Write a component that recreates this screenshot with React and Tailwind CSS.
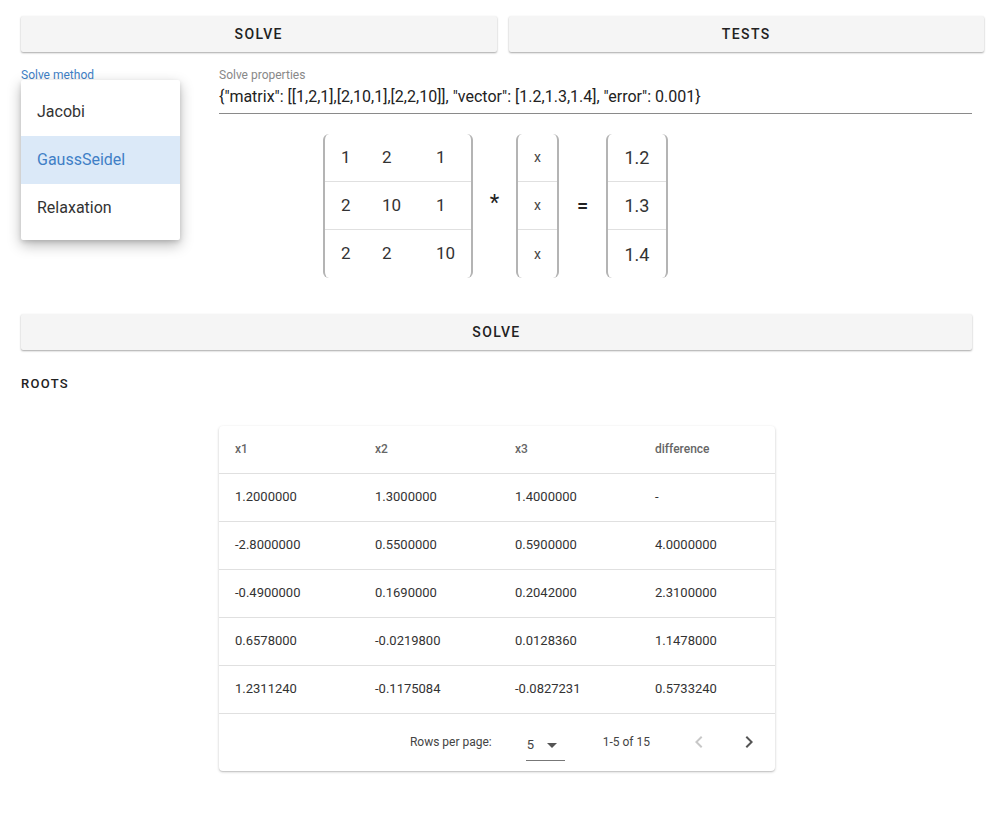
import React from 'react';

const matrix = [
    ['1', '2', '1'],
    ['2', '10', '1'],
    ['2', '2', '10'],
];
const vector = ['1.2', '1.3', '1.4'];

const roots = [
    ['1.2000000', '1.3000000', '1.4000000', '-'],
    ['-2.8000000', '0.5500000', '0.5900000', '4.0000000'],
    ['-0.4900000', '0.1690000', '0.2042000', '2.3100000'],
    ['0.6578000', '-0.0219800', '0.0128360', '1.1478000'],
    ['1.2311240', '-0.1175084', '-0.0827231', '0.5733240'],
];

const methods = ['Jacobi', 'GaussSeidel', 'Relaxation'];

const Button = ({ children, className = '' }) => (
    <button className={`h-9 bg-[#f5f5f5] rounded-[2px] shadow-[0_1px_2px_rgba(0,0,0,0.35)] text-[14px] font-medium tracking-[0.1em] text-[#222] ${className}`}>
        {children}
    </button>
);

const Bracket = ({ children, className = '' }) => (
    <div className={`border-x-2 border-[#b4b4b4] rounded-[6px] ${className}`}>{children}</div>
);

export default function App() {
    return (
        <div className="w-[1005px] min-h-[819px] bg-white px-[21px] pt-4 text-[#222]" style={{ fontFamily: 'Roboto, "Liberation Sans", sans-serif' }}>
            {/* top actions */}
            <div className="flex gap-3">
                <Button className="flex-1">SOLVE</Button>
                <Button className="flex-1">TESTS</Button>
            </div>

            <div className="flex pr-3 mt-[16px]">
                {/* method select with open menu */}
                <div className="w-[198px] relative">
                    <div className="text-[12px] text-[#3f7fc6] leading-[14px]">Solve method</div>
                    <div className="absolute left-0 top-[12px] w-[159px] bg-white rounded-[2px] py-2 shadow-[0_5px_14px_rgba(0,0,0,0.28),0_2px_4px_rgba(0,0,0,0.12)] z-10">
                        {methods.map((m) => (
                            <div key={m} className={`h-12 flex items-center px-4 text-[16px] ${m === 'GaussSeidel' ? 'bg-[#dbe9f8] text-[#3f7fc6]' : 'text-[#333]'}`}>
                                {m}
                            </div>
                        ))}
                    </div>
                </div>

                {/* properties input */}
                <div className="flex-1">
                    <div className="text-[12px] text-[#888] leading-[14px]">Solve properties</div>
                    <div className="text-[16px] leading-[19px] mt-[5px] pb-[7px] border-b border-[#8a8a8a]">
                        {'{"matrix": [[1,2,1],[2,10,1],[2,2,10]], "vector": [1.2,1.3,1.4], "error": 0.001}'}
                    </div>
                </div>
            </div>

            {/* equation */}
            <div className="flex items-center mt-[20px] ml-[302px]">
                <Bracket className="w-[150px]">
                    {matrix.map((row, i) => (
                        <div key={i} className={`flex h-12 items-center text-[17px] text-[#333] ${i < 2 ? 'border-b border-[#e0e0e0]' : ''}`}>
                            <span className="w-[57px] pl-4">{row[0]}</span>
                            <span className="w-[54px]">{row[1]}</span>
                            <span>{row[2]}</span>
                        </div>
                    ))}
                </Bracket>
                <div className="w-[43px] text-center text-[22px] text-[#222] -mt-[8px]">*</div>
                <Bracket className="w-[43px]">
                    {vector.map((_, i) => (
                        <div key={i} className={`h-12 flex items-center justify-center text-[14px] text-[#444] ${i < 2 ? 'border-b border-[#e0e0e0]' : ''}`}>x</div>
                    ))}
                </Bracket>
                <div className="w-[47px] text-center text-[20px] font-medium">=</div>
                <Bracket className="w-[62px]">
                    {vector.map((v, i) => (
                        <div key={v} className={`h-12 flex items-center justify-center text-[18px] text-[#333] ${i < 2 ? 'border-b border-[#e0e0e0]' : ''}`}>{v}</div>
                    ))}
                </Bracket>
            </div>

            <div className="pr-3 mt-[36px]">
                <Button className="w-full">SOLVE</Button>
            </div>

            <div className="mt-[24px] text-[13px] font-medium tracking-[0.1em] text-[#222]">ROOTS</div>

            {/* results table */}
            <div className="ml-[198px] mt-[32px] w-[556px] bg-white rounded-[4px] shadow-[0_1px_3px_rgba(0,0,0,0.2),0_1px_1px_rgba(0,0,0,0.1)]">
                <div className="grid grid-cols-[140px_140px_140px_1fr] h-12 items-center px-4 text-[12px] font-medium text-[#666] border-b border-[#e0e0e0]">
                    <span>x1</span><span>x2</span><span>x3</span><span>difference</span>
                </div>
                {roots.map((r, i) => (
                    <div key={i} className="grid grid-cols-[140px_140px_140px_1fr] h-12 items-center px-4 text-[13px] text-[#333] border-b border-[#e0e0e0]">
                        {r.map((c, j) => <span key={j}>{c}</span>)}
                    </div>
                ))}
                <div className="h-[57px] flex items-center justify-end pr-[14px] text-[12px] text-[#444]">
                    <span>Rows per page:</span>
                    <div className="ml-[34px] w-[39px] h-[32px] flex items-center border-b border-[#777] mt-[6px]">
                        <span className="ml-[1px] text-[13px]">5</span>
                        <svg viewBox="0 0 24 24" className="w-6 h-6 ml-[6px] fill-[#555]"><path d="M7 10l5 5 5-5z" /></svg>
                    </div>
                    <span className="ml-[38px]">1-5 of 15</span>
                    <svg viewBox="0 0 24 24" className="w-6 h-6 ml-[37px] fill-[#c8c8c8]"><path d="M15.41 7.41L14 6l-6 6 6 6 1.41-1.41L10.83 12z" /></svg>
                    <svg viewBox="0 0 24 24" className="w-6 h-6 ml-[26px] fill-[#555]"><path d="M10 6L8.59 7.41 13.17 12l-4.58 4.59L10 18l6-6z" /></svg>
                </div>
            </div>
        </div>
    );
}
